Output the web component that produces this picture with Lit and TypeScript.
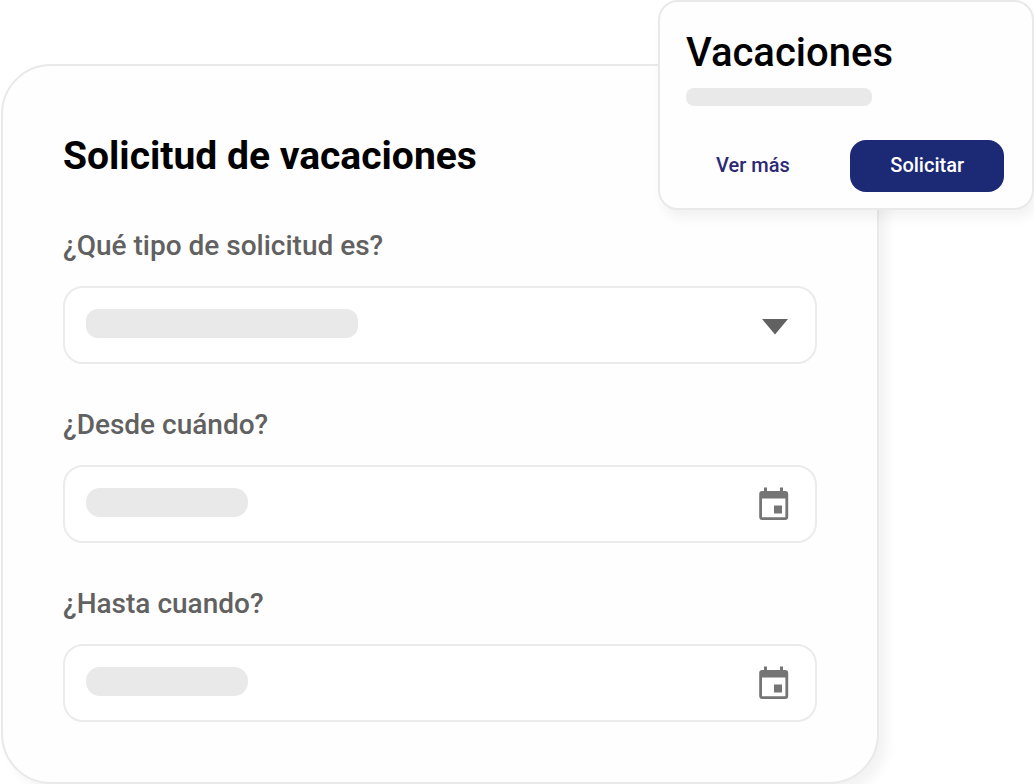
import { LitElement, html, css, svg } from "lit";
import { customElement, property } from "lit/decorators.js";

const arrowIcon = svg`<svg class="icon" viewBox="0 0 30 34" aria-hidden="true">
  <path d="M3 11h26L16 26.500z" fill="#616161"/>
</svg>`;

const calendarIcon = svg`<svg class="icon" viewBox="0 0 30 34" aria-hidden="true">
  <path fill="#757575" fill-rule="evenodd" d="M5 .5h3v3.500h13V.5h3v3.500h2.200a3 3 0 0 1 3 3v23a3 3 0 0 1-3 3H3.200a3 3 0 0 1-3-3v-23a3 3 0 0 1 3-3H5zM3 11.500v18.800h23.400V11.500z"/>
  <path fill="#757575" d="M15 18.500h8v8h-8z"/>
</svg>`;

@customElement("request-field")
export class RequestField extends LitElement {
  @property() label = "";
  @property() kind: "select" | "date" = "date";

  static styles = css`
    :host {
      display: flex;
      flex-direction: column;
      gap: 24px;
    }
    .label {
      font-size: 28px;
      font-weight: 500;
      line-height: 32px;
      color: #616161;
    }
    .box {
      display: grid;
      grid-template-columns: 1fr auto;
      grid-template-rows: 100%;
      align-items: center;
      height: 78px;
      box-sizing: border-box;
      border: 2px solid #ebebeb;
      border-radius: 20px;
      padding: 0 26px 0 21px;
      background: #fff;
    }
    .control {
      grid-area: 1 / 1 / 2 / 3;
      width: 100%;
      height: 100%;
      box-sizing: border-box;
      border: 0;
      margin: 0;
      padding: 0;
      appearance: none;
      background: transparent;
      font: inherit;
      font-size: 28px;
      color: #616161;
      outline: none;
    }
    .placeholder {
      grid-area: 1 / 1;
      width: 162px;
      height: 29px;
      margin-bottom: 3px;
      border-radius: 14px;
      background: #e9e9e9;
      pointer-events: none;
    }
    .placeholder.wide {
      width: 272px;
      border-radius: 12px;
    }
    .icon {
      grid-area: 1 / 2;
      display: block;
      width: 30px;
      height: 34px;
      pointer-events: none;
    }
  `;

  render() {
    const isSelect = this.kind === "select";
    return html`
      <label class="label" for="control">${this.label}</label>
      <div class="box">
        ${isSelect
          ? html`<select class="control" id="control"><option value=""></option></select>`
          : html`<input class="control" id="control" type="text" autocomplete="off" />`}
        <span class="placeholder ${isSelect ? "wide" : ""}"></span>
        ${isSelect ? arrowIcon : calendarIcon}
      </div>
    `;
  }
}

@customElement("app-root")
export class AppRoot extends LitElement {
  static styles = css`
    :host {
      display: block;
      position: relative;
      min-height: 100vh;
      box-sizing: border-box;
      padding: 64px 155px 0 1px;
      overflow: hidden;
      background: #fff;
      font-family: Roboto, "Liberation Sans", sans-serif;
    }
    .form {
      box-sizing: border-box;
      display: flex;
      flex-direction: column;
      gap: 45px;
      padding: 61px 60px 60px;
      border: 2px solid #e9e9e9;
      border-radius: 50px;
      background: #fefefe;
      box-shadow: 8px 8px 12px rgba(0, 0, 0, 0.05);
    }
    .title {
      margin: 0;
      font-size: 39px;
      font-weight: 700;
      line-height: 58px;
      color: #000;
    }
    .summary {
      position: absolute;
      top: 0;
      right: 0;
      width: 376px;
      box-sizing: border-box;
      display: flex;
      flex-direction: column;
      padding: 26px 28px 16px 26px;
      border: 2px solid #e9e9e9;
      border-radius: 20px;
      background: #fefefe;
      box-shadow: 4px 8px 12px rgba(0, 0, 0, 0.05);
    }
    .heading {
      margin: 0;
      font-size: 40px;
      font-weight: 500;
      line-height: 50px;
      color: #000;
    }
    .line {
      width: 186px;
      height: 18px;
      margin: 10px 0 34px;
      border-radius: 8px;
      background: #e9e9e9;
    }
    .actions {
      display: flex;
      justify-content: space-between;
    }
    .button {
      height: 52px;
      padding: 0 30px 2px;
      border: 0;
      border-radius: 16px;
      background: transparent;
      font: 500 20px/24px Roboto, "Liberation Sans", sans-serif;
      color: #2c2875;
      cursor: pointer;
    }
    .primary {
      padding: 0 40px 2px;
      background: #1c2974;
      color: #fff;
    }
  `;

  render() {
    return html`
      <form class="form">
        <h1 class="title">Solicitud de vacaciones</h1>
        <request-field kind="select" label="¿Qué tipo de solicitud es?"></request-field>
        <request-field label="¿Desde cuándo?"></request-field>
        <request-field label="¿Hasta cuando?"></request-field>
      </form>
      <section class="summary">
        <h2 class="heading">Vacaciones</h2>
        <span class="line"></span>
        <div class="actions">
          <button class="button" type="button">Ver más</button>
          <button class="button primary" type="button">Solicitar</button>
        </div>
      </section>
    `;
  }
}
